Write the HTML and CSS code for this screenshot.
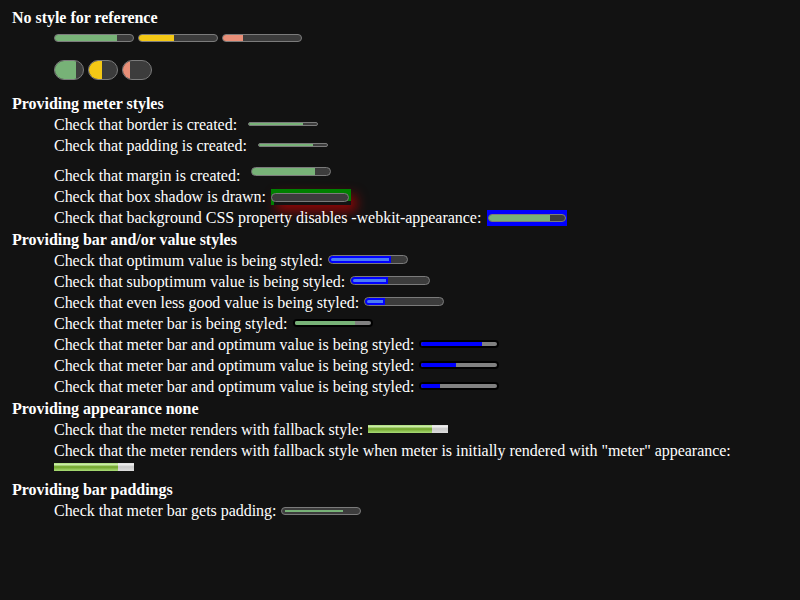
FILE: index.html
```html
<!DOCTYPE html>
<html>
<head>
<meta charset="utf-8">
<link rel="stylesheet" href="styles.css">
</head>
<body>
<div class="page">
  <div class="h first">No style for reference</div>
  <div class="indent">
    <div class="bars">
      <span class="m std"><span class="v good" style="width:80%"></span></span>
      <span class="m std"><span class="v ok" style="width:45%"></span></span>
      <span class="m std"><span class="v bad" style="width:26%"></span></span>
    </div>
    <div class="pills">
      <span class="m pill"><span class="v good" style="width:76%"></span></span>
      <span class="m pill"><span class="v ok" style="width:45%"></span></span>
      <span class="m pill"><span class="v bad" style="width:26%"></span></span>
    </div>
  </div>

  <div class="h sec-meter">Providing meter styles</div>
  <div class="indent">
    <div class="row"><span class="t">Check that border is created:</span><span class="m thin wide-gap"><span class="v good" style="width:80%"></span></span></div>
    <div class="row"><span class="t">Check that padding is created:</span><span class="m thin wide-gap"><span class="v good" style="width:80%"></span></span></div>
    <div class="row row-margin"><span class="t">Check that margin is created:</span><span class="m std tall wide-gap"><span class="v good" style="width:80%"></span></span></div>
    <div class="row"><span class="t">Check that box shadow is drawn:</span><span class="shadowbox"><span class="m std inner-pill"></span></span></div>
    <div class="row"><span class="t">Check that background CSS property disables -webkit-appearance:</span><span class="bluebox"><span class="m std inner-pill"><span class="v good" style="width:80%"></span></span></span></div>
  </div>

  <div class="h sec-bar">Providing bar and/or value styles</div>
  <div class="indent">
    <div class="row"><span class="t">Check that optimum value is being styled:</span><span class="m std tall"><span class="v blue-val" style="width:80%"></span></span></div>
    <div class="row"><span class="t">Check that suboptimum value is being styled:</span><span class="m std tall"><span class="v blue-val" style="width:47%"></span></span></div>
    <div class="row"><span class="t">Check that even less good value is being styled:</span><span class="m std tall"><span class="v blue-val" style="width:26%"></span></span></div>
    <div class="row"><span class="t">Check that meter bar is being styled:</span><span class="m blackbar"><span class="v good" style="width:80%"></span></span></div>
    <div class="row"><span class="t">Check that meter bar and optimum value is being styled:</span><span class="m blackbar"><span class="v pure-blue" style="width:80%"></span></span></div>
    <div class="row"><span class="t">Check that meter bar and optimum value is being styled:</span><span class="m blackbar"><span class="v pure-blue" style="width:45%"></span></span></div>
    <div class="row"><span class="t">Check that meter bar and optimum value is being styled:</span><span class="m blackbar"><span class="v pure-blue" style="width:25%"></span></span></div>
  </div>

  <div class="h sec-none">Providing appearance none</div>
  <div class="indent">
    <div class="row"><span class="t">Check that the meter renders with fallback style:</span><span class="m fallback"><span class="v fb-val" style="width:80%"></span></span></div>
    <div class="row"><span class="t">Check that the meter renders with fallback style when meter is initially rendered with "meter" appearance:</span></div>
    <div class="solo"><span class="m fallback flush"><span class="v fb-val" style="width:80%"></span></span></div>
  </div>

  <div class="h sec-pad">Providing bar paddings</div>
  <div class="indent">
    <div class="row"><span class="t">Check that meter bar gets padding:</span><span class="m std padded"><span class="v good thin-val" style="width:80%"></span></span></div>
  </div>
</div>
</body>
</html>
```

FILE: styles.css
```css
html, body {
  margin: 0;
  padding: 0;
  background: #121212;
}

body {
  color: #ffffff;
  font-family: "Liberation Serif", "Times New Roman", serif;
  font-size: 16px;
  letter-spacing: -0.03px;
}

.page {
  padding: 6px 0 0 12px;
}

.h {
  font-weight: bold;
  height: 21px;
  line-height: 23px;
}

.sec-meter { margin-top: 12px; }
.sec-bar { margin-top: 1px; }
.sec-none { margin-top: 1px; }
.sec-pad { margin-top: 0; }

.indent {
  padding-left: 42px;
}

.row {
  display: flex;
  align-items: center;
  height: 21px;
  white-space: nowrap;
}

.t {
  align-self: flex-start;
  height: 21px;
  line-height: 23px;
}

.row-margin {
  margin-top: 9px;
  align-items: flex-start;
}

.bars {
  display: flex;
  gap: 4px;
  margin-top: 7px;
}

.pills {
  display: flex;
  gap: 4px;
  margin-top: 18px;
}

/* meter base */
.m {
  display: flex;
  box-sizing: border-box;
  overflow: hidden;
  flex: none;
  margin-left: 5px;
}

.bars .m, .pills .m, .solo .m, .shadowbox .m, .bluebox .m {
  margin-left: 0;
}

.v {
  display: block;
  height: 100%;
  flex: none;
}

.std {
  width: 80px;
  height: 8px;
  border: 1px solid #7b7b7b;
  border-radius: 999px;
  background: #3c3c3c;
}

.pill {
  width: 30px;
  height: 20px;
  border: 1px solid #7b7b7b;
  border-radius: 999px;
  background: #3c3c3c;
}

.good { background: #77b277; }
.ok { background: #f4c815; }
.bad { background: #e88f78; }

.thin {
  width: 70px;
  height: 4px;
  border: 1px solid #7b7b7b;
  border-radius: 2px;
  background: #3c3c3c;
}

.wide-gap { margin-left: 11px; }

.tall { height: 9px; }

.row-margin .tall {
  margin-top: 3px;
}

.shadowbox {
  display: flex;
  align-items: flex-start;
  box-sizing: border-box;
  width: 80px;
  height: 16px;
  margin-left: 5px;
  padding-top: 4px;
  align-self: flex-start;
  margin-top: 4px;
  background:
    linear-gradient(#131313, #131313) 3px 100% / calc(100% - 3px) 4px no-repeat,
    #008000;
  box-shadow: 5px 6px 12px rgba(200, 0, 0, 0.7);
}

.bluebox {
  display: flex;
  align-items: center;
  justify-content: center;
  box-sizing: border-box;
  width: 80px;
  height: 16px;
  margin-left: 6px;
  align-self: flex-start;
  margin-top: 4px;
  background: #0000ff;
}

.inner-pill {
  width: 78px;
  height: 8px;
}

.shadowbox .inner-pill {
  height: 9px;
}

.blue-val {
  box-sizing: border-box;
  border: 2px solid #0000ff;
  border-radius: 4px 0 0 4px;
  background: #4b7cf5;
}

.blackbar {
  width: 80px;
  height: 8px;
  border: 2px solid #000000;
  border-radius: 4px;
  background: #808080;
}

.pure-blue { background: #0000ff; }

.fallback {
  width: 80px;
  height: 8px;
  background: linear-gradient(#dddddd, #eeeeee 20%, #cccccc 45%, #cccccc 55%, #dddddd);
}

.fb-val {
  background: linear-gradient(#aadd77, #cceeaa 20%, #77aa33 45%, #77aa33 55%, #aadd77);
}

.solo {
  display: flex;
  height: 18px;
  padding-top: 3px;
  box-sizing: border-box;
  align-items: flex-start;
}

.padded {
  padding: 2px 3px;
  margin-left: 5px;
  margin-top: 2px;
}

.thin-val {
  height: 2px;
}
```
